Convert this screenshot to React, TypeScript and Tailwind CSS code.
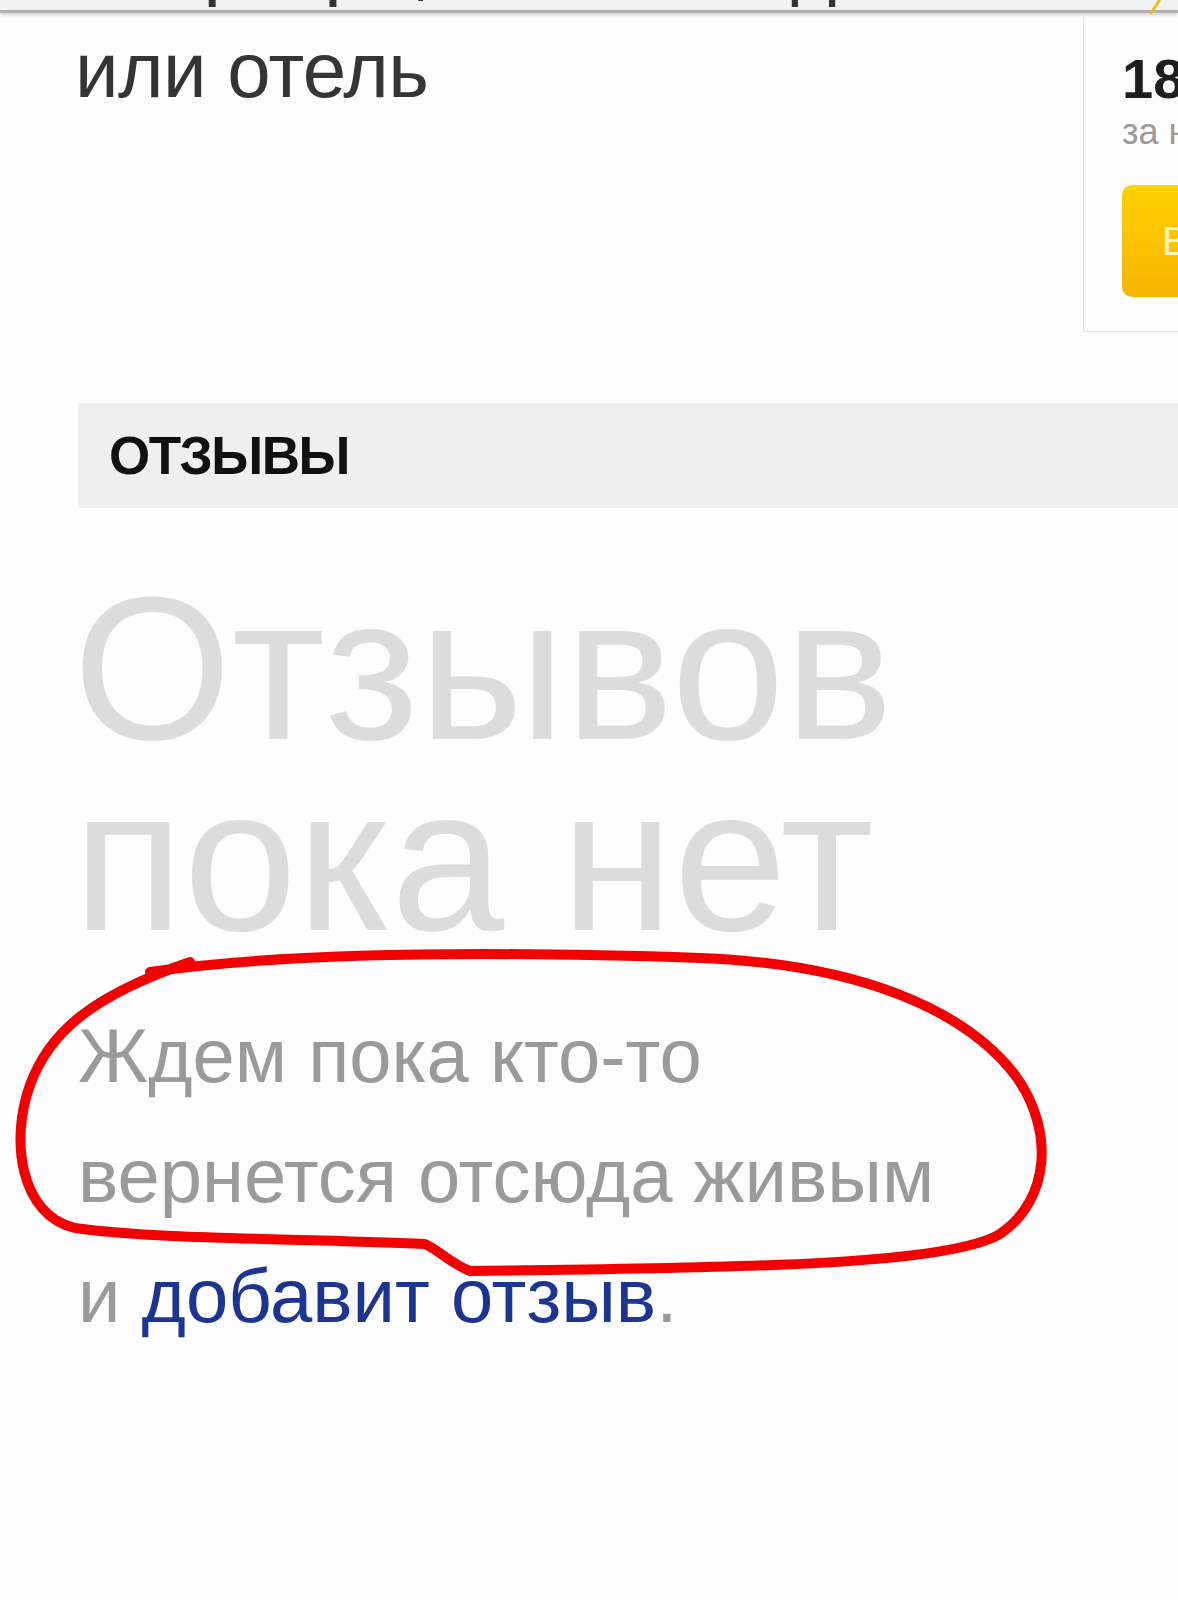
export default function App() {
  return (
    <div className="relative w-[1178px] h-[1600px] overflow-hidden bg-[#fdfdfd] font-['Liberation_Sans',Arial,sans-serif]">
      {/* top strip with cut-off previous title line */}
      <div className="h-[10px] overflow-hidden bg-[#f2f2f2] pl-[74px]">
        <div className="-mt-[75px] text-[78px] leading-none text-[#333] whitespace-nowrap">
          Квартира, гостевой дом
        </div>
      </div>
      <div className="h-[3px] bg-[#b3b3b3] shadow-[0_2px_3px_rgba(0,0,0,0.18)]" />

      <div className="flex">
        <div className="flex-1 pl-[75px] pt-[18px]">
          <div className="text-[78px] leading-none text-[#353535] tracking-[-0.5px] whitespace-nowrap">или отель</div>
        </div>
        <div className="w-[95px] h-[319px] border-l border-b border-[#e3e3e3] pl-[38px] pt-[38px] overflow-hidden">
          <div className="text-[56px] leading-none font-bold text-[#1e1e1e] whitespace-nowrap">18 000</div>
          <div className="mt-[7px] text-[36px] leading-none text-[#9a9a9a] whitespace-nowrap">за ночь</div>
          <div className="mt-[35px] h-[112px] w-[140px] rounded-[10px] bg-gradient-to-b from-[#ffd200] to-[#f8b400] pl-[40px] text-[40px] leading-[112px] text-[#fff4c4] whitespace-nowrap">
            Выбрать
          </div>
        </div>
      </div>

      <div className="mt-[71px] ml-[78px] h-[105px] bg-[#efefef] pl-[31px] text-[53px] leading-[105px] font-bold tracking-[-1.5px] text-[#111]">
        ОТЗЫВЫ
      </div>

      <div className="mt-[65px] pl-[73px] text-[204px] leading-[191px] text-[#dcdcdc] whitespace-nowrap">
        <div>Отзывов</div>
        <div>пока нет</div>
      </div>

      <div className="mt-[41px] pl-[78px] text-[76px] leading-[120px] text-[#9a9a9a] whitespace-nowrap">
        <div>Ждем пока кто-то</div>
        <div>вернется отсюда живым</div>
        <div>
          и <span className="text-[#1c3590]">добавит отзыв</span>.
        </div>
      </div>

      {/* tiny yellow star fragment at top */}
      <svg className="absolute left-[1145px] top-0" width="20" height="16" viewBox="0 0 20 16">
        <path d="M6 13 L14 1" stroke="#e0c020" strokeWidth="3" strokeLinecap="round" />
      </svg>

      {/* hand-drawn red loop */}
      <svg className="absolute left-0 top-0 pointer-events-none" width="1178" height="1600" viewBox="0 0 1178 1600">
        <path
          d="M 150 972 C 300 950, 520 952, 700 958 C 860 964, 965 1010, 1015 1075 C 1055 1130, 1050 1200, 1000 1234 C 950 1264, 760 1268, 470 1271 C 450 1263, 440 1251, 425 1244 C 300 1238, 160 1240, 75 1228 C 20 1215, 10 1140, 30 1085 C 50 1030, 95 995, 190 962"
          fill="none"
          stroke="#f20000"
          strokeWidth="10"
          strokeLinecap="round"
          strokeLinejoin="round"
        />
      </svg>
    </div>
  );
}
